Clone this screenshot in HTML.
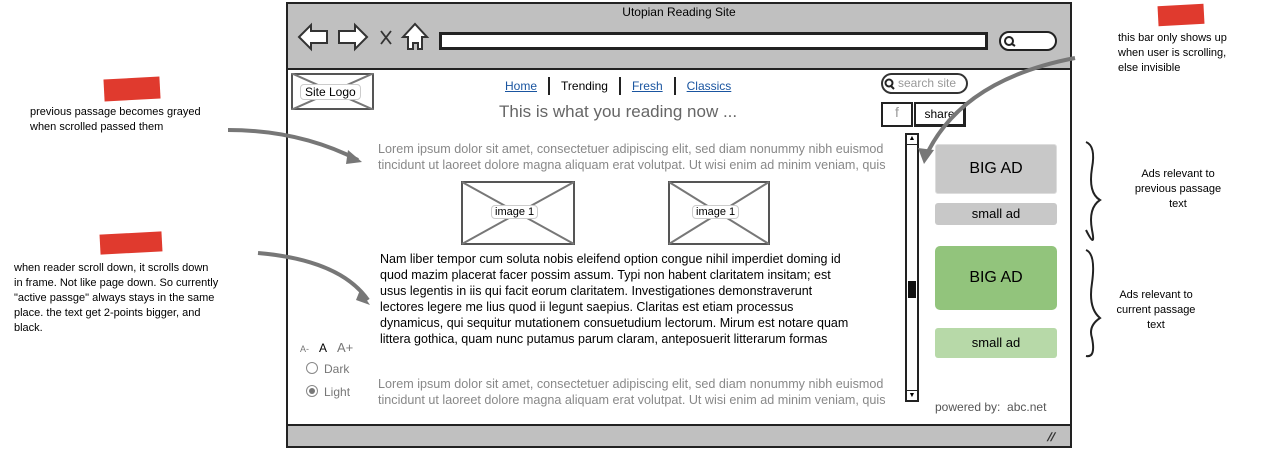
<!DOCTYPE html>
<html><head><meta charset="utf-8"><style>
*{margin:0;padding:0;box-sizing:border-box}
body{width:1262px;height:450px;background:#fff;position:relative;overflow:hidden;font-family:"Liberation Sans",sans-serif;color:#000}
.a{position:absolute}
.note{font-size:11px;line-height:15px;color:#000}
.red{position:absolute;background:#e03a2e;height:18px;transform:rotate(-3deg)}
.pg{font-size:12.6px;line-height:16px;color:#888;white-space:nowrap}
.pb{font-size:12.5px;line-height:16px;color:#000;white-space:nowrap}
.ad{position:absolute;border-radius:3px;text-align:center}
a{color:#1a55a0}
</style></head><body>
<div class="a" style="left:286px;top:2px;width:786px;height:446px;border:2px solid #222;background:#fff"></div>
<div class="a" style="left:288px;top:4px;width:782px;height:66px;background:#c0c0c0;border-bottom:2px solid #222"></div>
<div class="a" style="left:286px;top:5px;width:786px;text-align:center;font-size:12px">Utopian Reading Site</div>
<svg class="a" style="left:295px;top:20px" width="140" height="34" viewBox="0 0 140 34">
<path d="M4 17 L16 5 L16 11 L32 11 L32 23 L16 23 L16 29 Z" fill="#fff" stroke="#333" stroke-width="2"/>
<path d="M72 17 L60 5 L60 11 L44 11 L44 23 L60 23 L60 29 Z" fill="#fff" stroke="#333" stroke-width="2"/>
<path d="M86 11 L96 24 M96 11 L86 24" stroke="#333" stroke-width="1.8"/>
<path d="M108 17 L120 4 L132 17 L127 17 L127 29 L123 29 L123 23 L118 23 L118 29 L113 29 L113 17 Z" fill="#fff" stroke="#333" stroke-width="2"/>
</svg>
<div class="a" style="left:439px;top:32px;width:549px;height:18px;background:#fff;border:3px solid #222"></div>
<div class="a" style="left:999px;top:31px;width:58px;height:20px;background:#fff;border:2px solid #222;border-radius:10px"></div>
<svg class="a" style="left:1003px;top:35px" width="14" height="12"><circle cx="6" cy="6" r="4" fill="none" stroke="#222" stroke-width="2"/><path d="M9 9 L12 11" stroke="#222" stroke-width="2"/></svg>
<div class="a" style="left:291px;top:73px;width:83px;height:37px;border:2px solid #555"></div>
<svg class="a" style="left:291px;top:73px" width="83" height="37"><path d="M0 0 L83 37 M83 0 L0 37" stroke="#777" stroke-width="2"/></svg>
<div class="a" style="left:300px;top:84px;padding:0 4px;background:#fff;border:1px solid #ccc;border-radius:4px;font-size:12px">Site Logo</div>
<div class="a" style="left:505px;top:77px;font-size:12px;white-space:nowrap"><a style="text-decoration:underline">Home</a><span style="display:inline-block;width:2px;height:18px;background:#222;margin:0 11px -5px"></span>Trending<span style="display:inline-block;width:2px;height:18px;background:#222;margin:0 11px -5px"></span><a style="text-decoration:underline">Fresh</a><span style="display:inline-block;width:2px;height:18px;background:#222;margin:0 11px -5px"></span><a style="text-decoration:underline">Classics</a></div>
<div class="a" style="left:499px;top:102px;font-size:17px;color:#666">This is what you reading now ...</div>
<div class="a" style="left:881px;top:73px;width:87px;height:21px;border:2px solid #333;border-radius:11px"></div>
<svg class="a" style="left:884px;top:78px" width="12" height="12"><circle cx="5" cy="5" r="3.5" fill="none" stroke="#222" stroke-width="2"/><path d="M7 8 L10 11" stroke="#222" stroke-width="2"/></svg>
<div class="a" style="left:898px;top:76px;font-size:12px;color:#999">search site</div>
<div class="a" style="left:881px;top:102px;width:32px;height:25px;border:2px solid #222;text-align:center;font-size:14px;color:#999">f</div>
<div class="a" style="left:914px;top:102px;width:52px;height:25px;border:2px solid #222;border-right-width:3px;border-bottom-width:3px;text-align:center;font-size:12px;line-height:20px">share</div>
<div class="a pg" style="left:378px;top:141px">Lorem ipsum dolor sit amet, consectetuer adipiscing elit, sed diam nonummy nibh euismod<br>tincidunt ut laoreet dolore magna aliquam erat volutpat. Ut wisi enim ad minim veniam, quis</div>
<svg class="a" style="left:460px;top:180px" width="312" height="66">
<rect x="2" y="2" width="112" height="62" fill="#fff" stroke="#555" stroke-width="2"/><path d="M2 2 L114 64 M114 2 L2 64" stroke="#777" stroke-width="2"/>
<rect x="209" y="2" width="100" height="62" fill="#fff" stroke="#555" stroke-width="2"/><path d="M209 2 L309 64 M309 2 L209 64" stroke="#777" stroke-width="2"/></svg>
<div class="a" style="left:491px;top:205px;padding:0 3px;background:#fff;border:1px solid #ccc;border-radius:4px;font-size:11px">image 1</div>
<div class="a" style="left:692px;top:205px;padding:0 3px;background:#fff;border:1px solid #ccc;border-radius:4px;font-size:11px">image 1</div>
<div class="a pb" style="left:380px;top:251px">Nam liber tempor cum soluta nobis eleifend option congue nihil imperdiet doming id<br>quod mazim placerat facer possim assum. Typi non habent claritatem insitam; est<br>usus legentis in iis qui facit eorum claritatem. Investigationes demonstraverunt<br>lectores legere me lius quod ii legunt saepius. Claritas est etiam processus<br>dynamicus, qui sequitur mutationem consuetudium lectorum. Mirum est notare quam<br>littera gothica, quam nunc putamus parum claram, anteposuerit litterarum formas</div>
<div class="a pg" style="left:378px;top:376px">Lorem ipsum dolor sit amet, consectetuer adipiscing elit, sed diam nonummy nibh euismod<br>tincidunt ut laoreet dolore magna aliquam erat volutpat. Ut wisi enim ad minim veniam, quis</div>
<div class="a" style="left:300px;top:340px;font-size:12px;white-space:nowrap"><span style="font-size:9px;color:#777">A-</span>&nbsp;&nbsp;&nbsp;A&nbsp;&nbsp;&nbsp;<span style="font-size:13px;color:#777">A+</span></div>
<div class="a" style="left:306px;top:362px;width:12px;height:12px;border:1.5px solid #888;border-radius:50%"></div>
<div class="a" style="left:324px;top:362px;font-size:12px;color:#777">Dark</div>
<div class="a" style="left:306px;top:385px;width:12px;height:12px;border:1.5px solid #888;border-radius:50%"></div>
<div class="a" style="left:309px;top:388px;width:6px;height:6px;background:#777;border-radius:50%"></div>
<div class="a" style="left:324px;top:385px;font-size:12px;color:#777">Light</div>
<div class="a" style="left:905px;top:133px;width:14px;height:269px;border:2px solid #222;background:#fff"></div>
<div class="a" style="left:906px;top:134px;width:12px;height:11px;border-bottom:1.5px solid #222;font-size:7px;text-align:center;line-height:10px">▲</div>
<div class="a" style="left:906px;top:390px;width:12px;height:11px;border-top:1.5px solid #222;font-size:7px;text-align:center;line-height:10px">▼</div>
<div class="a" style="left:908px;top:281px;width:8px;height:17px;background:#111"></div>
<div class="ad" style="left:935px;top:144px;width:122px;height:50px;background:#c8c8c8;border:1px solid #ddd;font-size:16px;line-height:48px">BIG AD</div>
<div class="ad" style="left:935px;top:203px;width:122px;height:22px;background:#c8c8c8;font-size:13px;line-height:22px">small ad</div>
<div class="ad" style="left:935px;top:246px;width:122px;height:64px;background:#92c47c;font-size:16px;line-height:64px;border-radius:5px">BIG AD</div>
<div class="ad" style="left:935px;top:328px;width:122px;height:30px;background:#b7d9a8;font-size:13px;line-height:30px">small ad</div>
<div class="a" style="left:935px;top:400px;font-size:12px;color:#555">powered by:&nbsp; abc.net</div>
<div class="a" style="left:288px;top:424px;width:782px;height:22px;background:#c0c0c0;border-top:2px solid #222"></div>
<div class="a" style="left:1048px;top:430px;font-size:12px;font-weight:bold;color:#333;transform:skewX(-20deg)">//</div>
<svg class="a" style="left:1080px;top:138px" width="30" height="225">
<path d="M6 4 Q16 8 12 30 Q8 55 20 62 Q8 70 12 92 Q16 112 6 92" fill="none" stroke="#222" stroke-width="2"/>
<path d="M6 112 Q16 116 12 145 Q8 170 20 180 Q8 188 12 200 Q16 220 6 218" fill="none" stroke="#222" stroke-width="2"/>
</svg>
<svg class="a" style="left:0;top:0" width="1262" height="450">
<path d="M228 130 Q300 130 358 160" fill="none" stroke="#777" stroke-width="4"/>
<path d="M348 150 L362 162 L346 164 Z" fill="#777"/>
<path d="M258 253 Q340 260 368 300" fill="none" stroke="#777" stroke-width="4"/>
<path d="M360 290 L370 305 L356 300 Z" fill="#777"/>
<path d="M1075 58 Q960 80 925 158" fill="none" stroke="#777" stroke-width="4"/>
<path d="M918 148 L924 164 L934 150 Z" fill="#777"/>
</svg>
<div class="red" style="left:104px;top:78px;width:56px;height:22px"></div>
<div class="a note" style="left:30px;top:105px">previous passage becomes grayed<br>when scrolled passed them</div>
<div class="red" style="left:100px;top:233px;width:62px;height:20px"></div>
<div class="a note" style="left:14px;top:261px">when reader scroll down, it scrolls down<br>in frame. Not like page down. So currently<br>"active passge" always stays in the same<br>place. the text get 2-points bigger, and<br>black.</div>
<div class="red" style="left:1158px;top:5px;width:46px;height:20px"></div>
<div class="a note" style="left:1118px;top:31px">this bar only shows up<br>when user is scrolling,<br>else invisible</div>
<div class="a note" style="left:1134px;top:167px;text-align:center;width:88px">Ads relevant to<br>previous passage<br>text</div>
<div class="a note" style="left:1112px;top:288px;text-align:center;width:88px">Ads relevant to<br>current passage<br>text</div>
</body></html>
